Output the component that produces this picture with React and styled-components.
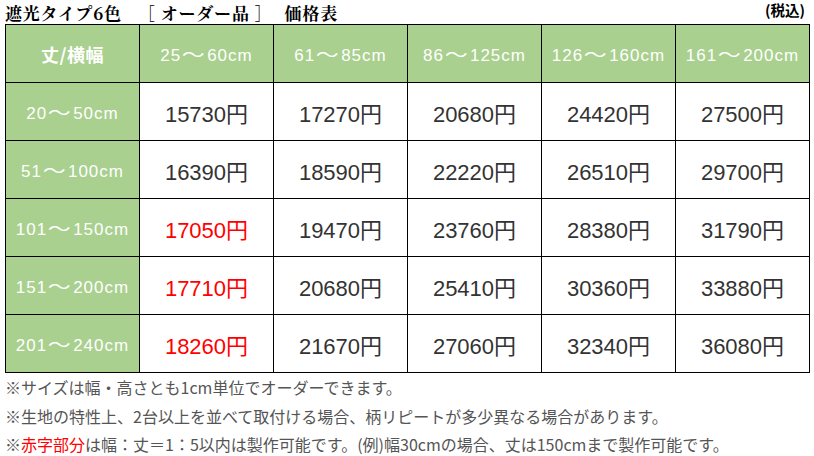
import React from "react";
import styled, { createGlobalStyle } from "styled-components";

const Global = createGlobalStyle`
  body {
    margin: 0;
    background: #fff;
    font-family: "Noto Sans CJK JP", "Noto Sans", sans-serif;
  }
`;

const Page = styled.div`
  width: 814px;
  height: 456px;
  padding: 0 4px 0 5px;
  box-sizing: border-box;
`;

const TitleBar = styled.div`
  display: flex;
  justify-content: space-between;
  align-items: flex-end;
  height: 24px;
`;

const Title = styled.div`
  display: flex;
  font-family: "Noto Serif CJK JP", "Liberation Serif", "Noto Sans CJK JP", serif;
  font-size: 17px;
  font-weight: bold;
  color: #000;
  line-height: 22px;
  letter-spacing: 0.8px;
  white-space: pre;
`;

const TitlePart = styled.span`
  margin-left: ${(p) => p.$gap || 0}px;
`;

const Tax = styled.div`
  font-size: 14.5px;
  font-weight: bold;
  color: #000;
  line-height: 22px;
  padding-right: 5px;
  margin-bottom: 3px;
`;

const Table = styled.table`
  width: 805px;
  border-collapse: collapse;
  table-layout: fixed;
`;

const Head = styled.th`
  background: #a9d08e;
  color: #fff;
  height: 57px;
  border: 1px solid #000;
  border-bottom: 1px dotted #000;
  font-family: ${(p) => (p.$corner ? `"Noto Sans CJK JP", sans-serif` : `"Liberation Sans", "Noto Sans CJK JP", sans-serif`)};
  font-weight: ${(p) => (p.$corner ? "bold" : "normal")};
  font-size: ${(p) => (p.$corner ? "18px" : "17px")};
  letter-spacing: ${(p) => (p.$corner ? "0.5px" : "1px")};
  padding: 0;
`;

const RowHead = styled.th`
  background: #a9d08e;
  color: #fff;
  height: 57px;
  border: 1px solid #000;
  font-family: "Liberation Sans", "Noto Sans CJK JP", sans-serif;
  font-weight: normal;
  font-size: 17px;
  letter-spacing: 1px;
  padding: 0;
`;

const Tilde = styled.span`
  display: inline-block;
  transform: scaleX(1.35);
  margin: 0 4px;
`;

const Cell = styled.td`
  height: 57px;
  border: 1px solid #000;
  text-align: center;
  font-family: "Liberation Sans", "Noto Sans CJK JP", sans-serif;
  font-size: 22px;
  color: ${(p) => (p.$red ? "#ff0000" : "#333")};
  padding: 0;
`;

const Notes = styled.div`
  display: flex;
  flex-direction: column;
`;

const Note = styled.div`
  font-size: 16px;
  line-height: 28.5px;
  color: #555;
  white-space: nowrap;
`;

const Red = styled.span`
  color: #ff0000;
`;

const Range = ({ from, to }) => (
  <>
    {from}
    <Tilde>～</Tilde>
    {to}cm
  </>
);

const widths = [
  [25, 60],
  [61, 85],
  [86, 125],
  [126, 160],
  [161, 200],
];

const rows = [
  { from: 20, to: 50, prices: [15730, 17270, 20680, 24420, 27500] },
  { from: 51, to: 100, prices: [16390, 18590, 22220, 26510, 29700] },
  { from: 101, to: 150, prices: [17050, 19470, 23760, 28380, 31790], red: true },
  { from: 151, to: 200, prices: [17710, 20680, 25410, 30360, 33880], red: true },
  { from: 201, to: 240, prices: [18260, 21670, 27060, 32340, 36080], red: true },
];

export default function App() {
  return (
    <Page>
      <Global />
      <TitleBar>
        <Title>
          <TitlePart>遮光タイプ6色</TitlePart>
          <TitlePart $gap={16}>［ オーダー品 ］</TitlePart>
          <TitlePart $gap={12}>価格表</TitlePart>
        </Title>
        <Tax>(税込)</Tax>
      </TitleBar>
      <Table>
        <thead>
          <tr>
            <Head $corner>丈/横幅</Head>
            {widths.map(([a, b]) => (
              <Head key={a}>
                <Range from={a} to={b} />
              </Head>
            ))}
          </tr>
        </thead>
        <tbody>
          {rows.map((r) => (
            <tr key={r.from}>
              <RowHead>
                <Range from={r.from} to={r.to} />
              </RowHead>
              {r.prices.map((p, i) => (
                <Cell key={i} $red={r.red && i === 0}>
                  {p}円
                </Cell>
              ))}
            </tr>
          ))}
        </tbody>
      </Table>
      <Notes>
        <Note>※サイズは幅・高さとも1cm単位でオーダーできます。</Note>
        <Note>※生地の特性上、2台以上を並べて取付ける場合、柄リピートが多少異なる場合があります。</Note>
        <Note>
          ※<Red>赤字部分</Red>は幅：丈＝1：5以内は製作可能です。(例)幅30cmの場合、丈は150cmまで製作可能です。
        </Note>
      </Notes>
    </Page>
  );
}
